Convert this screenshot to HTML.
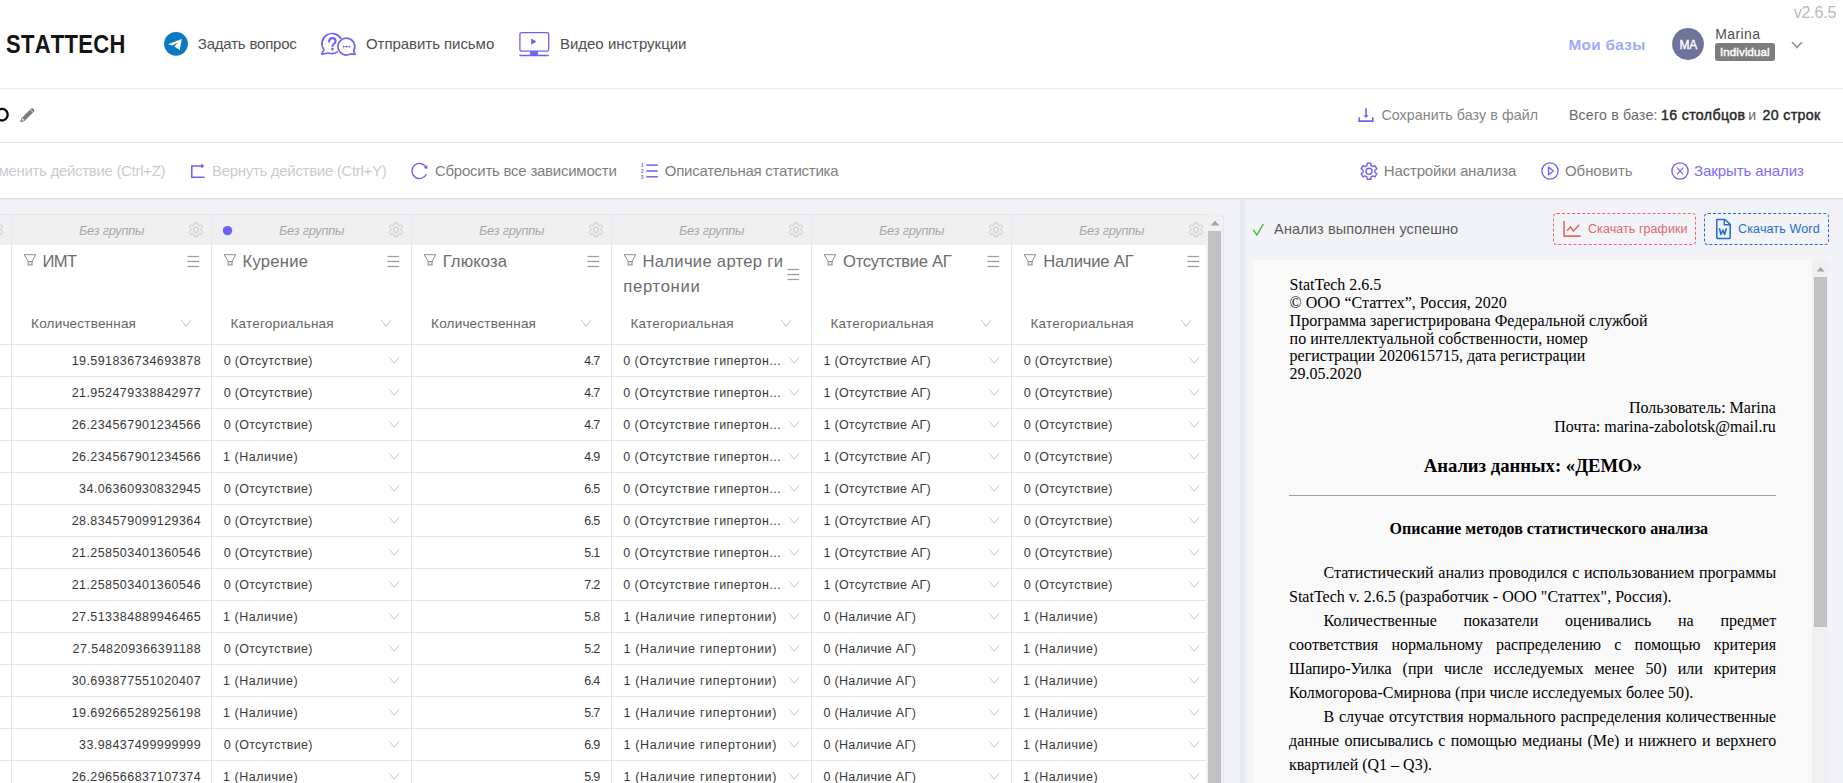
<!DOCTYPE html>
<html><head><meta charset="utf-8"><style>
html,body{margin:0;padding:0;width:1843px;height:783px;overflow:hidden;background:#fff;}
.t{position:absolute;white-space:nowrap;line-height:normal;}
.r{position:absolute;display:block;}
</style></head><body>
<div class="r" style="left:0px;top:0px;width:1843px;height:783px;background:#ffffff;"></div>
<div class="r" style="left:0px;top:88px;width:1843px;height:1px;background:#ebebeb;"></div>
<div class="r" style="left:0px;top:89px;width:1843px;height:1px;background:#f9f9f9;"></div>
<div class="r" style="left:0px;top:142px;width:1843px;height:1px;background:#e0e0e0;"></div>
<div class="r" style="left:0px;top:198px;width:1843px;height:1px;background:#dcdde2;"></div>
<div class="r" style="left:0px;top:199px;width:1843px;height:584px;background:#f2f3f7;"></div>
<div class="r" style="left:0px;top:199px;width:1843px;height:1px;background:#e9eaee;"></div>
<div class="t" id="stattech" style="left:6.00px;top:33.00px;font-size:22px;color:#141414;font-weight:bold;font-style:normal;font-family:'Liberation Sans', sans-serif;letter-spacing:0.286px;font-kerning:none;transform:scale(1,1.14);transform-origin:0 20px;">STATTECH</div>
<svg class="r" style="left:160px;top:28px;" width="32" height="32" viewBox="0 0 32 32"><circle cx="16" cy="15.85" r="11.9" fill="#0b78c2"/><path d="M8 16.3 L21.7 11 L19.8 21.9 L14.3 18.6 L18.2 14.1 L12.4 17.6 Z" fill="#fff"/></svg>
<div class="t" id="zadat" style="left:197.80px;top:35.00px;font-size:15px;color:#505050;font-weight:normal;font-style:normal;font-family:'Liberation Sans', sans-serif;letter-spacing:-0.200px;">Задать вопрос</div>
<svg class="r" style="left:316px;top:28px;" width="44" height="32" viewBox="0 0 44 32"><g fill="none" stroke="#6c63f5" stroke-width="1.65" stroke-linejoin="round"><path d="M25.14 10.89 A10.2 10.2 0 1 0 7.9 21.7 L5.6 26.1 L10.9 25.2 Q12.2 24.9 13.2 25.3 A10.2 10.2 0 0 0 21.75 23.56"/><path d="M37.67 22.8 A8.4 8.4 0 1 0 34.6 25.87 L39.1 26.4 Z"/></g><path d="M13.1 13.6 Q13.1 10.1 16.4 10.1 Q19.6 10.1 19.6 13 Q19.6 14.8 17.8 16 Q16.4 16.9 16.4 18.3" fill="none" stroke="#6c63f5" stroke-width="2.1" stroke-linecap="round"/><circle cx="16.4" cy="21.1" r="1.35" fill="#6c63f5"/><circle cx="27.4" cy="18.6" r="0.95" fill="#6c63f5"/><circle cx="30.4" cy="18.6" r="0.95" fill="#6c63f5"/><circle cx="33.5" cy="18.6" r="0.95" fill="#6c63f5"/><path d="M27.4 18.6 H33.5" stroke="#6c63f5" stroke-width="0.6"/></svg>
<div class="t" id="otpr" style="left:366.00px;top:35.00px;font-size:15px;color:#505050;font-weight:normal;font-style:normal;font-family:'Liberation Sans', sans-serif;letter-spacing:-0.053px;">Отправить письмо</div>
<svg class="r" style="left:514px;top:28px;" width="40" height="32" viewBox="0 0 40 32"><rect x="5.9" y="4.7" width="28.8" height="18.5" rx="1.6" fill="none" stroke="#6c63f5" stroke-width="1.3"/><path d="M17.2 10.6 L22.5 13.5 L17.2 16.8 Z" fill="#6c63f5"/><rect x="16.1" y="23.2" width="7.8" height="4" fill="#6c63f5"/><rect x="5.3" y="26.8" width="29.6" height="1.4" rx="0.6" fill="#6c63f5"/></svg>
<div class="t" id="video" style="left:559.90px;top:35.00px;font-size:15px;color:#505050;font-weight:normal;font-style:normal;font-family:'Liberation Sans', sans-serif;letter-spacing:0.000px;">Видео инструкции</div>
<div class="t" id="ver" style="left:1793.80px;top:4.10px;font-size:16px;color:#b9b9b9;font-weight:normal;font-style:normal;font-family:'Liberation Sans', sans-serif;letter-spacing:-0.200px;">v2.6.5</div>
<div class="t" id="mybases" style="left:1568.50px;top:36.00px;font-size:15.3px;color:#9eaafc;font-weight:bold;font-style:normal;font-family:'Liberation Sans', sans-serif;letter-spacing:0.314px;">Мои базы</div>
<svg class="r" style="left:1672px;top:28px;" width="32" height="32" viewBox="0 0 32 32"><circle cx="16" cy="16" r="15.9" fill="#6e7499"/></svg>
<div class="t" id="ma" style="left:1679.50px;top:38.00px;font-size:12px;color:#ffffff;font-weight:normal;font-style:normal;font-family:'Liberation Sans', sans-serif;letter-spacing:-0.300px;-webkit-text-stroke:0.35px #fff;">MA</div>
<div class="t" id="marina" style="left:1715.30px;top:25.90px;font-size:14px;color:#505050;font-weight:normal;font-style:normal;font-family:'Liberation Sans', sans-serif;letter-spacing:0.400px;">Marina</div>
<div class="r" style="left:1715px;top:43px;width:60px;height:18px;background:#7d7d7d;border-radius:3px;"></div>
<div class="t" id="indiv" style="left:1720.00px;top:46.00px;font-size:11.5px;color:#ffffff;font-weight:normal;font-style:normal;font-family:'Liberation Sans', sans-serif;letter-spacing:0.120px;-webkit-text-stroke:0.45px #fff;">Individual</div>
<svg class="r" style="left:1789px;top:38px;" width="16" height="14" viewBox="0 0 16 14"><path d="M3 4 L8 9.4 L13 4" fill="none" stroke="#969696" stroke-width="1.7"/></svg>
<svg class="r" style="left:-10px;top:104px;" width="22" height="22" viewBox="0 0 22 22"><ellipse cx="12.05" cy="10.65" rx="5.65" ry="5.85" fill="none" stroke="#0a0a0a" stroke-width="2.3"/></svg>
<svg class="r" style="left:18px;top:105px;" width="18" height="18" viewBox="0 0 18 18"><path d="M4.2 12.6 L13.2 3.6 Q14 2.9 14.8 3.6 L16 4.8 Q16.7 5.6 16 6.4 L7 15.4 Z" fill="#7a7a7a"/><path d="M12.3 4.5 L15.1 7.3" stroke="#fff" stroke-width="0.8"/><path d="M4.2 12.6 L7 15.4 L2.6 16.9 Z" fill="#fff" stroke="#7a7a7a" stroke-width="0.9" stroke-linejoin="round"/><path d="M2.6 16.9 L3.4 14.6 L4.8 16 Z" fill="#7a7a7a"/></svg>
<svg class="r" style="left:1354px;top:104px;" width="24" height="22" viewBox="0 0 24 22"><path d="M12 4.2 V12.5" stroke="#6c63f5" stroke-width="1.6"/><path d="M9.3 11.2 L14.7 11.2 L12 14 Z" fill="#6c63f5"/><path d="M5.1 13.2 V17.1 H18.8 V13.2" fill="none" stroke="#6c63f5" stroke-width="1.6"/></svg>
<div class="t" id="save" style="left:1381.40px;top:107.00px;font-size:14.2px;color:#858585;font-weight:normal;font-style:normal;font-family:'Liberation Sans', sans-serif;letter-spacing:0.100px;">Сохранить базу в файл</div>
<div class="t" id="vsego" style="left:1568.90px;top:107.00px;font-size:14.2px;color:#6a6a6a;font-weight:normal;font-style:normal;font-family:'Liberation Sans', sans-serif;letter-spacing:0.183px;">Всего в базе:</div>
<div class="t" id="16st" style="left:1660.90px;top:107.00px;font-size:14.2px;color:#2a2a2a;font-weight:normal;font-style:normal;font-family:'Liberation Sans', sans-serif;letter-spacing:0.360px;-webkit-text-stroke:0.45px #2a2a2a;">16 столбцов</div>
<div class="t" id="i" style="left:1748.20px;top:107.00px;font-size:14.2px;color:#6a6a6a;font-weight:normal;font-style:normal;font-family:'Liberation Sans', sans-serif;letter-spacing:0.000px;">и</div>
<div class="t" id="20str" style="left:1762.50px;top:107.00px;font-size:14.2px;color:#2a2a2a;font-weight:normal;font-style:normal;font-family:'Liberation Sans', sans-serif;letter-spacing:0.343px;-webkit-text-stroke:0.45px #2a2a2a;">20 строк</div>
<div class="t" id="undo" style="right:1677.80px;top:162.00px;font-size:15px;color:#c9cbd2;font-weight:normal;font-style:normal;font-family:'Liberation Sans', sans-serif;letter-spacing:-0.308px;">Отменить действие (Ctrl+Z)</div>
<svg class="r" style="left:185px;top:158px;" width="30" height="26" viewBox="0 0 30 26"><path d="M17.5 8.1 H6.8 V19.3 H19.6" fill="none" stroke="#6c63f5" stroke-width="1.5"/><path d="M16.2 5.6 L19.3 8.1 L16.2 10.6 Z" fill="#6c63f5"/></svg>
<div class="t" id="redo" style="left:212.00px;top:162.00px;font-size:15px;color:#c9cbd2;font-weight:normal;font-style:normal;font-family:'Liberation Sans', sans-serif;letter-spacing:-0.308px;">Вернуть действие (Ctrl+Y)</div>
<svg class="r" style="left:405px;top:158px;" width="30" height="26" viewBox="0 0 30 26"><path d="M20.9 8.8 A7.6 7.6 0 1 0 21.4 16.3" fill="none" stroke="#6c63f5" stroke-width="1.4"/><path d="M18.8 9.9 L22.3 7.1 L22.3 10.9 Z" fill="#6c63f5"/></svg>
<div class="t" id="reset" style="left:434.90px;top:162.00px;font-size:15px;color:#7f7f7f;font-weight:normal;font-style:normal;font-family:'Liberation Sans', sans-serif;letter-spacing:-0.243px;">Сбросить все зависимости</div>
<svg class="r" style="left:636px;top:158px;" width="28" height="26" viewBox="0 0 28 26"><g stroke="#6c63f5" stroke-width="1.5"><path d="M10.3 7.1 H21.9"/><path d="M10.3 13 H21.9"/><path d="M10.3 18.8 H21.9"/></g><g fill="#6c63f5" font-family="Liberation Sans" font-weight="bold" font-size="4.6"><text x="5" y="9">1</text><text x="5" y="14.8">2</text><text x="5" y="20.6">3</text></g></svg>
<div class="t" id="descr" style="left:664.80px;top:162.00px;font-size:15px;color:#7f7f7f;font-weight:normal;font-style:normal;font-family:'Liberation Sans', sans-serif;letter-spacing:-0.245px;">Описательная статистика</div>
<svg class="r" style="left:1356px;top:158px;" width="26" height="26" viewBox="0 0 26 26"><path d="M11.16 5.31 L14.84 5.31 L15.05 7.66 L16.86 8.70 L19.00 7.71 L20.84 10.90 L18.91 12.26 L18.91 14.34 L20.84 15.70 L19.00 18.89 L16.86 17.90 L15.05 18.94 L14.84 21.29 L11.16 21.29 L10.95 18.94 L9.14 17.90 L7.00 18.89 L5.16 15.70 L7.09 14.34 L7.09 12.26 L5.16 10.90 L7.00 7.71 L9.14 8.70 L10.95 7.66 Z" fill="none" stroke="#6c63f5" stroke-width="1.4" stroke-linejoin="round"/><circle cx="13" cy="13.3" r="3.1" fill="none" stroke="#6c63f5" stroke-width="1.4"/></svg>
<div class="t" id="settings" style="left:1383.80px;top:162.00px;font-size:15px;color:#7f7f7f;font-weight:normal;font-style:normal;font-family:'Liberation Sans', sans-serif;letter-spacing:-0.163px;">Настройки анализа</div>
<svg class="r" style="left:1536px;top:158px;" width="26" height="26" viewBox="0 0 26 26"><circle cx="14" cy="13" r="8.1" fill="none" stroke="#6c63f5" stroke-width="1.35"/><path d="M12.5 9.1 L17.4 13 L12.5 16.8 Z" fill="none" stroke="#6c63f5" stroke-width="1.35" stroke-linejoin="round"/></svg>
<div class="t" id="refresh" style="left:1565.00px;top:162.00px;font-size:15px;color:#7f7f7f;font-weight:normal;font-style:normal;font-family:'Liberation Sans', sans-serif;letter-spacing:-0.057px;">Обновить</div>
<svg class="r" style="left:1666px;top:158px;" width="26" height="26" viewBox="0 0 26 26"><circle cx="14" cy="13" r="8.1" fill="none" stroke="#6c63f5" stroke-width="1.35"/><path d="M11 9.6 L17.2 16.3 M17.2 9.6 L11 16.3" stroke="#6c63f5" stroke-width="1.2"/></svg>
<div class="t" id="close" style="left:1694.00px;top:162.00px;font-size:15px;color:#7c6ef5;font-weight:normal;font-style:normal;font-family:'Liberation Sans', sans-serif;letter-spacing:-0.077px;">Закрыть анализ</div>
<div class="r" style="left:0px;top:214px;width:1206px;height:31px;background:#efefef;"></div>
<div class="r" style="left:0px;top:245px;width:1206px;height:538px;background:#ffffff;"></div>
<div class="r" style="left:1206px;top:214px;width:18px;height:569px;background:#f0f0f0;"></div>
<svg class="r" style="left:1206px;top:214px;" width="18" height="16" viewBox="0 0 18 16"><path d="M4.6 11.6 L13.4 11.6 L9 6.8 Z" fill="#a3a3a3"/></svg>
<div class="r" style="left:1208px;top:231px;width:13px;height:552px;background:#c1c1c1;"></div>
<div class="r" style="left:0px;top:214px;width:1206px;height:1px;background:#e4e6ea;"></div>
<div class="r" style="left:1223px;top:214px;width:1px;height:569px;background:#e6e7eb;"></div>
<div class="r" style="left:11px;top:214px;width:1px;height:569px;background:#e5e6eb;"></div>
<div class="r" style="left:211px;top:214px;width:1px;height:569px;background:#e5e6eb;"></div>
<div class="r" style="left:411px;top:214px;width:1px;height:569px;background:#e5e6eb;"></div>
<div class="r" style="left:611px;top:214px;width:1px;height:569px;background:#e5e6eb;"></div>
<div class="r" style="left:811px;top:214px;width:1px;height:569px;background:#e5e6eb;"></div>
<div class="r" style="left:1011px;top:214px;width:1px;height:569px;background:#e5e6eb;"></div>
<div class="r" style="left:0px;top:344px;width:1206px;height:1px;background:#e5e6eb;"></div>
<div class="r" style="left:0px;top:376px;width:1206px;height:1px;background:#e5e6eb;"></div>
<div class="r" style="left:0px;top:408px;width:1206px;height:1px;background:#e5e6eb;"></div>
<div class="r" style="left:0px;top:440px;width:1206px;height:1px;background:#e5e6eb;"></div>
<div class="r" style="left:0px;top:472px;width:1206px;height:1px;background:#e5e6eb;"></div>
<div class="r" style="left:0px;top:504px;width:1206px;height:1px;background:#e5e6eb;"></div>
<div class="r" style="left:0px;top:536px;width:1206px;height:1px;background:#e5e6eb;"></div>
<div class="r" style="left:0px;top:568px;width:1206px;height:1px;background:#e5e6eb;"></div>
<div class="r" style="left:0px;top:600px;width:1206px;height:1px;background:#e5e6eb;"></div>
<div class="r" style="left:0px;top:632px;width:1206px;height:1px;background:#e5e6eb;"></div>
<div class="r" style="left:0px;top:664px;width:1206px;height:1px;background:#e5e6eb;"></div>
<div class="r" style="left:0px;top:696px;width:1206px;height:1px;background:#e5e6eb;"></div>
<div class="r" style="left:0px;top:728px;width:1206px;height:1px;background:#e5e6eb;"></div>
<div class="r" style="left:0px;top:760px;width:1206px;height:1px;background:#e5e6eb;"></div>
<svg class="r" style="left:221px;top:224px;" width="13" height="13" viewBox="0 0 13 13"><circle cx="6.5" cy="6.6" r="4.7" fill="#6c63f5"/></svg>
<svg class="r" style="left:-16px;top:218px;" width="24" height="24" viewBox="0 0 24 24"><path d="M10.43 4.98 L13.57 4.98 L13.78 6.91 L15.34 7.82 L17.12 7.03 L18.69 9.75 L17.12 10.90 L17.12 12.70 L18.69 13.85 L17.12 16.57 L15.34 15.78 L13.78 16.69 L13.57 18.62 L10.43 18.62 L10.22 16.69 L8.66 15.78 L6.88 16.57 L5.31 13.85 L6.88 12.70 L6.88 10.90 L5.31 9.75 L6.88 7.03 L8.66 7.82 L10.22 6.91 Z" fill="none" stroke="#c9c9c9" stroke-width="1.0" stroke-linejoin="round"/><circle cx="12" cy="11.8" r="2.6" fill="none" stroke="#c9c9c9" stroke-width="1.0"/></svg>
<div class="t" id="grp0" style="left:78.90px;top:223.00px;font-size:12.8px;color:#a9a9a9;font-weight:normal;font-style:italic;font-family:'Liberation Sans', sans-serif;letter-spacing:-0.244px;">Без группы</div>
<svg class="r" style="left:184px;top:218px;" width="24" height="24" viewBox="0 0 24 24"><path d="M10.43 4.98 L13.57 4.98 L13.78 6.91 L15.34 7.82 L17.12 7.03 L18.69 9.75 L17.12 10.90 L17.12 12.70 L18.69 13.85 L17.12 16.57 L15.34 15.78 L13.78 16.69 L13.57 18.62 L10.43 18.62 L10.22 16.69 L8.66 15.78 L6.88 16.57 L5.31 13.85 L6.88 12.70 L6.88 10.90 L5.31 9.75 L6.88 7.03 L8.66 7.82 L10.22 6.91 Z" fill="none" stroke="#c9c9c9" stroke-width="1.0" stroke-linejoin="round"/><circle cx="12" cy="11.8" r="2.6" fill="none" stroke="#c9c9c9" stroke-width="1.0"/></svg>
<svg class="r" style="left:20px;top:250px;" width="20" height="20" viewBox="0 0 20 20"><path d="M4.1 4.7 H15.8 L12 11.5 H8.2 Z" fill="none" stroke="#8a8a8a" stroke-width="1" stroke-linejoin="round"/><rect x="8.2" y="11.5" width="3.8" height="3.4" fill="none" stroke="#8a8a8a" stroke-width="1.1"/></svg>
<div class="t" id="title0" style="left:42.50px;top:252.20px;font-size:16.6px;color:#6c6c6c;font-weight:normal;font-style:normal;font-family:'Liberation Sans', sans-serif;letter-spacing:-0.600px;">ИМТ</div>
<svg class="r" style="left:183px;top:254px;" width="16" height="14" viewBox="0 0 16 14"><g stroke="#9c9c9c" stroke-width="1.25"><path d="M4.4 2.5 H16"/><path d="M4.4 7.5 H16"/><path d="M4.4 12.5 H16"/></g></svg>
<div class="t" id="type0" style="left:31.10px;top:316.00px;font-size:13.5px;color:#666666;font-weight:normal;font-style:normal;font-family:'Liberation Sans', sans-serif;letter-spacing:0.200px;">Количественная</div>
<svg class="r" style="left:176px;top:314px;" width="20" height="20" viewBox="0 0 20 20"><path d="M5.1 6.1 L10 12.5 L14.7 6.3" fill="none" stroke="#c4c4c4" stroke-width="1"/></svg>
<div class="t" id="grp1" style="left:278.90px;top:223.00px;font-size:12.8px;color:#a9a9a9;font-weight:normal;font-style:italic;font-family:'Liberation Sans', sans-serif;letter-spacing:-0.244px;">Без группы</div>
<svg class="r" style="left:384px;top:218px;" width="24" height="24" viewBox="0 0 24 24"><path d="M10.43 4.98 L13.57 4.98 L13.78 6.91 L15.34 7.82 L17.12 7.03 L18.69 9.75 L17.12 10.90 L17.12 12.70 L18.69 13.85 L17.12 16.57 L15.34 15.78 L13.78 16.69 L13.57 18.62 L10.43 18.62 L10.22 16.69 L8.66 15.78 L6.88 16.57 L5.31 13.85 L6.88 12.70 L6.88 10.90 L5.31 9.75 L6.88 7.03 L8.66 7.82 L10.22 6.91 Z" fill="none" stroke="#c9c9c9" stroke-width="1.0" stroke-linejoin="round"/><circle cx="12" cy="11.8" r="2.6" fill="none" stroke="#c9c9c9" stroke-width="1.0"/></svg>
<svg class="r" style="left:220px;top:250px;" width="20" height="20" viewBox="0 0 20 20"><path d="M4.1 4.7 H15.8 L12 11.5 H8.2 Z" fill="none" stroke="#8a8a8a" stroke-width="1" stroke-linejoin="round"/><rect x="8.2" y="11.5" width="3.8" height="3.4" fill="none" stroke="#8a8a8a" stroke-width="1.1"/></svg>
<div class="t" id="title1" style="left:242.50px;top:252.20px;font-size:16.6px;color:#6c6c6c;font-weight:normal;font-style:normal;font-family:'Liberation Sans', sans-serif;letter-spacing:0.267px;">Курение</div>
<svg class="r" style="left:383px;top:254px;" width="16" height="14" viewBox="0 0 16 14"><g stroke="#9c9c9c" stroke-width="1.25"><path d="M4.4 2.5 H16"/><path d="M4.4 7.5 H16"/><path d="M4.4 12.5 H16"/></g></svg>
<div class="t" id="type1" style="left:230.50px;top:316.00px;font-size:13.5px;color:#666666;font-weight:normal;font-style:normal;font-family:'Liberation Sans', sans-serif;letter-spacing:0.200px;">Категориальная</div>
<svg class="r" style="left:376px;top:314px;" width="20" height="20" viewBox="0 0 20 20"><path d="M5.1 6.1 L10 12.5 L14.7 6.3" fill="none" stroke="#c4c4c4" stroke-width="1"/></svg>
<div class="t" id="grp2" style="left:478.90px;top:223.00px;font-size:12.8px;color:#a9a9a9;font-weight:normal;font-style:italic;font-family:'Liberation Sans', sans-serif;letter-spacing:-0.244px;">Без группы</div>
<svg class="r" style="left:584px;top:218px;" width="24" height="24" viewBox="0 0 24 24"><path d="M10.43 4.98 L13.57 4.98 L13.78 6.91 L15.34 7.82 L17.12 7.03 L18.69 9.75 L17.12 10.90 L17.12 12.70 L18.69 13.85 L17.12 16.57 L15.34 15.78 L13.78 16.69 L13.57 18.62 L10.43 18.62 L10.22 16.69 L8.66 15.78 L6.88 16.57 L5.31 13.85 L6.88 12.70 L6.88 10.90 L5.31 9.75 L6.88 7.03 L8.66 7.82 L10.22 6.91 Z" fill="none" stroke="#c9c9c9" stroke-width="1.0" stroke-linejoin="round"/><circle cx="12" cy="11.8" r="2.6" fill="none" stroke="#c9c9c9" stroke-width="1.0"/></svg>
<svg class="r" style="left:420px;top:250px;" width="20" height="20" viewBox="0 0 20 20"><path d="M4.1 4.7 H15.8 L12 11.5 H8.2 Z" fill="none" stroke="#8a8a8a" stroke-width="1" stroke-linejoin="round"/><rect x="8.2" y="11.5" width="3.8" height="3.4" fill="none" stroke="#8a8a8a" stroke-width="1.1"/></svg>
<div class="t" id="title2" style="left:442.70px;top:252.20px;font-size:16.6px;color:#6c6c6c;font-weight:normal;font-style:normal;font-family:'Liberation Sans', sans-serif;letter-spacing:0.133px;">Глюкоза</div>
<svg class="r" style="left:583px;top:254px;" width="16" height="14" viewBox="0 0 16 14"><g stroke="#9c9c9c" stroke-width="1.25"><path d="M4.4 2.5 H16"/><path d="M4.4 7.5 H16"/><path d="M4.4 12.5 H16"/></g></svg>
<div class="t" id="type2" style="left:431.10px;top:316.00px;font-size:13.5px;color:#666666;font-weight:normal;font-style:normal;font-family:'Liberation Sans', sans-serif;letter-spacing:0.200px;">Количественная</div>
<svg class="r" style="left:576px;top:314px;" width="20" height="20" viewBox="0 0 20 20"><path d="M5.1 6.1 L10 12.5 L14.7 6.3" fill="none" stroke="#c4c4c4" stroke-width="1"/></svg>
<div class="t" id="grp3" style="left:678.90px;top:223.00px;font-size:12.8px;color:#a9a9a9;font-weight:normal;font-style:italic;font-family:'Liberation Sans', sans-serif;letter-spacing:-0.244px;">Без группы</div>
<svg class="r" style="left:784px;top:218px;" width="24" height="24" viewBox="0 0 24 24"><path d="M10.43 4.98 L13.57 4.98 L13.78 6.91 L15.34 7.82 L17.12 7.03 L18.69 9.75 L17.12 10.90 L17.12 12.70 L18.69 13.85 L17.12 16.57 L15.34 15.78 L13.78 16.69 L13.57 18.62 L10.43 18.62 L10.22 16.69 L8.66 15.78 L6.88 16.57 L5.31 13.85 L6.88 12.70 L6.88 10.90 L5.31 9.75 L6.88 7.03 L8.66 7.82 L10.22 6.91 Z" fill="none" stroke="#c9c9c9" stroke-width="1.0" stroke-linejoin="round"/><circle cx="12" cy="11.8" r="2.6" fill="none" stroke="#c9c9c9" stroke-width="1.0"/></svg>
<svg class="r" style="left:620px;top:250px;" width="20" height="20" viewBox="0 0 20 20"><path d="M4.1 4.7 H15.8 L12 11.5 H8.2 Z" fill="none" stroke="#8a8a8a" stroke-width="1" stroke-linejoin="round"/><rect x="8.2" y="11.5" width="3.8" height="3.4" fill="none" stroke="#8a8a8a" stroke-width="1.1"/></svg>
<div class="t" id="title3a" style="left:642.50px;top:252.30px;font-size:16.6px;color:#6c6c6c;font-weight:normal;font-style:normal;font-family:'Liberation Sans', sans-serif;letter-spacing:0.307px;">Наличие артер ги</div>
<div class="t" id="title3b" style="left:623.20px;top:276.90px;font-size:16.6px;color:#6c6c6c;font-weight:normal;font-style:normal;font-family:'Liberation Sans', sans-serif;letter-spacing:0.743px;">пертонии</div>
<svg class="r" style="left:783px;top:267px;" width="16" height="14" viewBox="0 0 16 14"><g stroke="#9c9c9c" stroke-width="1.25"><path d="M4.4 2.5 H16"/><path d="M4.4 7.5 H16"/><path d="M4.4 12.5 H16"/></g></svg>
<div class="t" id="type3" style="left:630.50px;top:316.00px;font-size:13.5px;color:#666666;font-weight:normal;font-style:normal;font-family:'Liberation Sans', sans-serif;letter-spacing:0.200px;">Категориальная</div>
<svg class="r" style="left:776px;top:314px;" width="20" height="20" viewBox="0 0 20 20"><path d="M5.1 6.1 L10 12.5 L14.7 6.3" fill="none" stroke="#c4c4c4" stroke-width="1"/></svg>
<div class="t" id="grp4" style="left:878.90px;top:223.00px;font-size:12.8px;color:#a9a9a9;font-weight:normal;font-style:italic;font-family:'Liberation Sans', sans-serif;letter-spacing:-0.244px;">Без группы</div>
<svg class="r" style="left:984px;top:218px;" width="24" height="24" viewBox="0 0 24 24"><path d="M10.43 4.98 L13.57 4.98 L13.78 6.91 L15.34 7.82 L17.12 7.03 L18.69 9.75 L17.12 10.90 L17.12 12.70 L18.69 13.85 L17.12 16.57 L15.34 15.78 L13.78 16.69 L13.57 18.62 L10.43 18.62 L10.22 16.69 L8.66 15.78 L6.88 16.57 L5.31 13.85 L6.88 12.70 L6.88 10.90 L5.31 9.75 L6.88 7.03 L8.66 7.82 L10.22 6.91 Z" fill="none" stroke="#c9c9c9" stroke-width="1.0" stroke-linejoin="round"/><circle cx="12" cy="11.8" r="2.6" fill="none" stroke="#c9c9c9" stroke-width="1.0"/></svg>
<svg class="r" style="left:820px;top:250px;" width="20" height="20" viewBox="0 0 20 20"><path d="M4.1 4.7 H15.8 L12 11.5 H8.2 Z" fill="none" stroke="#8a8a8a" stroke-width="1" stroke-linejoin="round"/><rect x="8.2" y="11.5" width="3.8" height="3.4" fill="none" stroke="#8a8a8a" stroke-width="1.1"/></svg>
<div class="t" id="title4" style="left:843.10px;top:252.20px;font-size:16.6px;color:#6c6c6c;font-weight:normal;font-style:normal;font-family:'Liberation Sans', sans-serif;letter-spacing:-0.300px;">Отсутствие АГ</div>
<svg class="r" style="left:983px;top:254px;" width="16" height="14" viewBox="0 0 16 14"><g stroke="#9c9c9c" stroke-width="1.25"><path d="M4.4 2.5 H16"/><path d="M4.4 7.5 H16"/><path d="M4.4 12.5 H16"/></g></svg>
<div class="t" id="type4" style="left:830.50px;top:316.00px;font-size:13.5px;color:#666666;font-weight:normal;font-style:normal;font-family:'Liberation Sans', sans-serif;letter-spacing:0.200px;">Категориальная</div>
<svg class="r" style="left:976px;top:314px;" width="20" height="20" viewBox="0 0 20 20"><path d="M5.1 6.1 L10 12.5 L14.7 6.3" fill="none" stroke="#c4c4c4" stroke-width="1"/></svg>
<div class="t" id="grp5" style="left:1078.90px;top:223.00px;font-size:12.8px;color:#a9a9a9;font-weight:normal;font-style:italic;font-family:'Liberation Sans', sans-serif;letter-spacing:-0.244px;">Без группы</div>
<svg class="r" style="left:1184px;top:218px;" width="24" height="24" viewBox="0 0 24 24"><path d="M10.43 4.98 L13.57 4.98 L13.78 6.91 L15.34 7.82 L17.12 7.03 L18.69 9.75 L17.12 10.90 L17.12 12.70 L18.69 13.85 L17.12 16.57 L15.34 15.78 L13.78 16.69 L13.57 18.62 L10.43 18.62 L10.22 16.69 L8.66 15.78 L6.88 16.57 L5.31 13.85 L6.88 12.70 L6.88 10.90 L5.31 9.75 L6.88 7.03 L8.66 7.82 L10.22 6.91 Z" fill="none" stroke="#c9c9c9" stroke-width="1.0" stroke-linejoin="round"/><circle cx="12" cy="11.8" r="2.6" fill="none" stroke="#c9c9c9" stroke-width="1.0"/></svg>
<svg class="r" style="left:1020px;top:250px;" width="20" height="20" viewBox="0 0 20 20"><path d="M4.1 4.7 H15.8 L12 11.5 H8.2 Z" fill="none" stroke="#8a8a8a" stroke-width="1" stroke-linejoin="round"/><rect x="8.2" y="11.5" width="3.8" height="3.4" fill="none" stroke="#8a8a8a" stroke-width="1.1"/></svg>
<div class="t" id="title5" style="left:1043.30px;top:252.20px;font-size:16.6px;color:#6c6c6c;font-weight:normal;font-style:normal;font-family:'Liberation Sans', sans-serif;letter-spacing:-0.178px;">Наличие АГ</div>
<svg class="r" style="left:1183px;top:254px;" width="16" height="14" viewBox="0 0 16 14"><g stroke="#9c9c9c" stroke-width="1.25"><path d="M4.4 2.5 H16"/><path d="M4.4 7.5 H16"/><path d="M4.4 12.5 H16"/></g></svg>
<div class="t" id="type5" style="left:1030.50px;top:316.00px;font-size:13.5px;color:#666666;font-weight:normal;font-style:normal;font-family:'Liberation Sans', sans-serif;letter-spacing:0.200px;">Категориальная</div>
<svg class="r" style="left:1176px;top:314px;" width="20" height="20" viewBox="0 0 20 20"><path d="M5.1 6.1 L10 12.5 L14.7 6.3" fill="none" stroke="#c4c4c4" stroke-width="1"/></svg>
<div class="t" id="imt0" style="right:1641.86px;top:354.00px;font-size:12.5px;color:#383838;font-weight:normal;font-style:normal;font-family:'Liberation Sans', sans-serif;letter-spacing:0.435px;">19.591836734693878</div>
<div class="t" id="kur0" style="left:223.70px;top:354.00px;font-size:12.5px;color:#383838;font-weight:normal;font-style:normal;font-family:'Liberation Sans', sans-serif;letter-spacing:0.308px;">0 (Отсутствие)</div>
<svg class="r" style="left:387px;top:355px;" width="16" height="12" viewBox="0 0 16 12"><path d="M2.4 2.3 L7.2 8.4 L12 2.3" fill="none" stroke="#c8c8c8" stroke-width="1"/></svg>
<div class="t" id="glu0" style="right:1243.50px;top:354.00px;font-size:12.5px;color:#383838;font-weight:normal;font-style:normal;font-family:'Liberation Sans', sans-serif;letter-spacing:-0.700px;">4.7</div>
<div class="t" id="art0" style="left:623.20px;top:354.00px;font-size:12.5px;color:#383838;font-weight:normal;font-style:normal;font-family:'Liberation Sans', sans-serif;letter-spacing:0.492px;">0 (Отсутствие гипертон...</div>
<svg class="r" style="left:787px;top:355px;" width="16" height="12" viewBox="0 0 16 12"><path d="M2.4 2.3 L7.2 8.4 L12 2.3" fill="none" stroke="#c8c8c8" stroke-width="1"/></svg>
<div class="t" id="ots0" style="left:823.60px;top:354.00px;font-size:12.5px;color:#383838;font-weight:normal;font-style:normal;font-family:'Liberation Sans', sans-serif;letter-spacing:0.237px;">1 (Отсутствие АГ)</div>
<svg class="r" style="left:987px;top:355px;" width="16" height="12" viewBox="0 0 16 12"><path d="M2.4 2.3 L7.2 8.4 L12 2.3" fill="none" stroke="#c8c8c8" stroke-width="1"/></svg>
<div class="t" id="nal0" style="left:1023.70px;top:354.00px;font-size:12.5px;color:#383838;font-weight:normal;font-style:normal;font-family:'Liberation Sans', sans-serif;letter-spacing:0.308px;">0 (Отсутствие)</div>
<svg class="r" style="left:1187px;top:355px;" width="16" height="12" viewBox="0 0 16 12"><path d="M2.4 2.3 L7.2 8.4 L12 2.3" fill="none" stroke="#c8c8c8" stroke-width="1"/></svg>
<div class="t" id="imt1" style="right:1641.86px;top:386.00px;font-size:12.5px;color:#383838;font-weight:normal;font-style:normal;font-family:'Liberation Sans', sans-serif;letter-spacing:0.435px;">21.952479338842977</div>
<div class="t" id="kur1" style="left:223.70px;top:386.00px;font-size:12.5px;color:#383838;font-weight:normal;font-style:normal;font-family:'Liberation Sans', sans-serif;letter-spacing:0.308px;">0 (Отсутствие)</div>
<svg class="r" style="left:387px;top:387px;" width="16" height="12" viewBox="0 0 16 12"><path d="M2.4 2.3 L7.2 8.4 L12 2.3" fill="none" stroke="#c8c8c8" stroke-width="1"/></svg>
<div class="t" id="glu1" style="right:1243.50px;top:386.00px;font-size:12.5px;color:#383838;font-weight:normal;font-style:normal;font-family:'Liberation Sans', sans-serif;letter-spacing:-0.700px;">4.7</div>
<div class="t" id="art1" style="left:623.20px;top:386.00px;font-size:12.5px;color:#383838;font-weight:normal;font-style:normal;font-family:'Liberation Sans', sans-serif;letter-spacing:0.492px;">0 (Отсутствие гипертон...</div>
<svg class="r" style="left:787px;top:387px;" width="16" height="12" viewBox="0 0 16 12"><path d="M2.4 2.3 L7.2 8.4 L12 2.3" fill="none" stroke="#c8c8c8" stroke-width="1"/></svg>
<div class="t" id="ots1" style="left:823.60px;top:386.00px;font-size:12.5px;color:#383838;font-weight:normal;font-style:normal;font-family:'Liberation Sans', sans-serif;letter-spacing:0.237px;">1 (Отсутствие АГ)</div>
<svg class="r" style="left:987px;top:387px;" width="16" height="12" viewBox="0 0 16 12"><path d="M2.4 2.3 L7.2 8.4 L12 2.3" fill="none" stroke="#c8c8c8" stroke-width="1"/></svg>
<div class="t" id="nal1" style="left:1023.70px;top:386.00px;font-size:12.5px;color:#383838;font-weight:normal;font-style:normal;font-family:'Liberation Sans', sans-serif;letter-spacing:0.308px;">0 (Отсутствие)</div>
<svg class="r" style="left:1187px;top:387px;" width="16" height="12" viewBox="0 0 16 12"><path d="M2.4 2.3 L7.2 8.4 L12 2.3" fill="none" stroke="#c8c8c8" stroke-width="1"/></svg>
<div class="t" id="imt2" style="right:1641.86px;top:418.00px;font-size:12.5px;color:#383838;font-weight:normal;font-style:normal;font-family:'Liberation Sans', sans-serif;letter-spacing:0.435px;">26.234567901234566</div>
<div class="t" id="kur2" style="left:223.70px;top:418.00px;font-size:12.5px;color:#383838;font-weight:normal;font-style:normal;font-family:'Liberation Sans', sans-serif;letter-spacing:0.308px;">0 (Отсутствие)</div>
<svg class="r" style="left:387px;top:419px;" width="16" height="12" viewBox="0 0 16 12"><path d="M2.4 2.3 L7.2 8.4 L12 2.3" fill="none" stroke="#c8c8c8" stroke-width="1"/></svg>
<div class="t" id="glu2" style="right:1243.50px;top:418.00px;font-size:12.5px;color:#383838;font-weight:normal;font-style:normal;font-family:'Liberation Sans', sans-serif;letter-spacing:-0.700px;">4.7</div>
<div class="t" id="art2" style="left:623.20px;top:418.00px;font-size:12.5px;color:#383838;font-weight:normal;font-style:normal;font-family:'Liberation Sans', sans-serif;letter-spacing:0.492px;">0 (Отсутствие гипертон...</div>
<svg class="r" style="left:787px;top:419px;" width="16" height="12" viewBox="0 0 16 12"><path d="M2.4 2.3 L7.2 8.4 L12 2.3" fill="none" stroke="#c8c8c8" stroke-width="1"/></svg>
<div class="t" id="ots2" style="left:823.60px;top:418.00px;font-size:12.5px;color:#383838;font-weight:normal;font-style:normal;font-family:'Liberation Sans', sans-serif;letter-spacing:0.237px;">1 (Отсутствие АГ)</div>
<svg class="r" style="left:987px;top:419px;" width="16" height="12" viewBox="0 0 16 12"><path d="M2.4 2.3 L7.2 8.4 L12 2.3" fill="none" stroke="#c8c8c8" stroke-width="1"/></svg>
<div class="t" id="nal2" style="left:1023.70px;top:418.00px;font-size:12.5px;color:#383838;font-weight:normal;font-style:normal;font-family:'Liberation Sans', sans-serif;letter-spacing:0.308px;">0 (Отсутствие)</div>
<svg class="r" style="left:1187px;top:419px;" width="16" height="12" viewBox="0 0 16 12"><path d="M2.4 2.3 L7.2 8.4 L12 2.3" fill="none" stroke="#c8c8c8" stroke-width="1"/></svg>
<div class="t" id="imt3" style="right:1641.86px;top:450.00px;font-size:12.5px;color:#383838;font-weight:normal;font-style:normal;font-family:'Liberation Sans', sans-serif;letter-spacing:0.435px;">26.234567901234566</div>
<div class="t" id="kur3" style="left:223.10px;top:450.00px;font-size:12.5px;color:#383838;font-weight:normal;font-style:normal;font-family:'Liberation Sans', sans-serif;letter-spacing:0.500px;">1 (Наличие)</div>
<svg class="r" style="left:387px;top:451px;" width="16" height="12" viewBox="0 0 16 12"><path d="M2.4 2.3 L7.2 8.4 L12 2.3" fill="none" stroke="#c8c8c8" stroke-width="1"/></svg>
<div class="t" id="glu3" style="right:1243.50px;top:450.00px;font-size:12.5px;color:#383838;font-weight:normal;font-style:normal;font-family:'Liberation Sans', sans-serif;letter-spacing:-0.700px;">4.9</div>
<div class="t" id="art3" style="left:623.20px;top:450.00px;font-size:12.5px;color:#383838;font-weight:normal;font-style:normal;font-family:'Liberation Sans', sans-serif;letter-spacing:0.492px;">0 (Отсутствие гипертон...</div>
<svg class="r" style="left:787px;top:451px;" width="16" height="12" viewBox="0 0 16 12"><path d="M2.4 2.3 L7.2 8.4 L12 2.3" fill="none" stroke="#c8c8c8" stroke-width="1"/></svg>
<div class="t" id="ots3" style="left:823.60px;top:450.00px;font-size:12.5px;color:#383838;font-weight:normal;font-style:normal;font-family:'Liberation Sans', sans-serif;letter-spacing:0.237px;">1 (Отсутствие АГ)</div>
<svg class="r" style="left:987px;top:451px;" width="16" height="12" viewBox="0 0 16 12"><path d="M2.4 2.3 L7.2 8.4 L12 2.3" fill="none" stroke="#c8c8c8" stroke-width="1"/></svg>
<div class="t" id="nal3" style="left:1023.70px;top:450.00px;font-size:12.5px;color:#383838;font-weight:normal;font-style:normal;font-family:'Liberation Sans', sans-serif;letter-spacing:0.308px;">0 (Отсутствие)</div>
<svg class="r" style="left:1187px;top:451px;" width="16" height="12" viewBox="0 0 16 12"><path d="M2.4 2.3 L7.2 8.4 L12 2.3" fill="none" stroke="#c8c8c8" stroke-width="1"/></svg>
<div class="t" id="imt4" style="right:1641.86px;top:482.00px;font-size:12.5px;color:#383838;font-weight:normal;font-style:normal;font-family:'Liberation Sans', sans-serif;letter-spacing:0.435px;">34.06360930832945</div>
<div class="t" id="kur4" style="left:223.70px;top:482.00px;font-size:12.5px;color:#383838;font-weight:normal;font-style:normal;font-family:'Liberation Sans', sans-serif;letter-spacing:0.308px;">0 (Отсутствие)</div>
<svg class="r" style="left:387px;top:483px;" width="16" height="12" viewBox="0 0 16 12"><path d="M2.4 2.3 L7.2 8.4 L12 2.3" fill="none" stroke="#c8c8c8" stroke-width="1"/></svg>
<div class="t" id="glu4" style="right:1243.50px;top:482.00px;font-size:12.5px;color:#383838;font-weight:normal;font-style:normal;font-family:'Liberation Sans', sans-serif;letter-spacing:-0.700px;">6.5</div>
<div class="t" id="art4" style="left:623.20px;top:482.00px;font-size:12.5px;color:#383838;font-weight:normal;font-style:normal;font-family:'Liberation Sans', sans-serif;letter-spacing:0.492px;">0 (Отсутствие гипертон...</div>
<svg class="r" style="left:787px;top:483px;" width="16" height="12" viewBox="0 0 16 12"><path d="M2.4 2.3 L7.2 8.4 L12 2.3" fill="none" stroke="#c8c8c8" stroke-width="1"/></svg>
<div class="t" id="ots4" style="left:823.60px;top:482.00px;font-size:12.5px;color:#383838;font-weight:normal;font-style:normal;font-family:'Liberation Sans', sans-serif;letter-spacing:0.237px;">1 (Отсутствие АГ)</div>
<svg class="r" style="left:987px;top:483px;" width="16" height="12" viewBox="0 0 16 12"><path d="M2.4 2.3 L7.2 8.4 L12 2.3" fill="none" stroke="#c8c8c8" stroke-width="1"/></svg>
<div class="t" id="nal4" style="left:1023.70px;top:482.00px;font-size:12.5px;color:#383838;font-weight:normal;font-style:normal;font-family:'Liberation Sans', sans-serif;letter-spacing:0.308px;">0 (Отсутствие)</div>
<svg class="r" style="left:1187px;top:483px;" width="16" height="12" viewBox="0 0 16 12"><path d="M2.4 2.3 L7.2 8.4 L12 2.3" fill="none" stroke="#c8c8c8" stroke-width="1"/></svg>
<div class="t" id="imt5" style="right:1641.86px;top:514.00px;font-size:12.5px;color:#383838;font-weight:normal;font-style:normal;font-family:'Liberation Sans', sans-serif;letter-spacing:0.435px;">28.834579099129364</div>
<div class="t" id="kur5" style="left:223.70px;top:514.00px;font-size:12.5px;color:#383838;font-weight:normal;font-style:normal;font-family:'Liberation Sans', sans-serif;letter-spacing:0.308px;">0 (Отсутствие)</div>
<svg class="r" style="left:387px;top:515px;" width="16" height="12" viewBox="0 0 16 12"><path d="M2.4 2.3 L7.2 8.4 L12 2.3" fill="none" stroke="#c8c8c8" stroke-width="1"/></svg>
<div class="t" id="glu5" style="right:1243.50px;top:514.00px;font-size:12.5px;color:#383838;font-weight:normal;font-style:normal;font-family:'Liberation Sans', sans-serif;letter-spacing:-0.700px;">6.5</div>
<div class="t" id="art5" style="left:623.20px;top:514.00px;font-size:12.5px;color:#383838;font-weight:normal;font-style:normal;font-family:'Liberation Sans', sans-serif;letter-spacing:0.492px;">0 (Отсутствие гипертон...</div>
<svg class="r" style="left:787px;top:515px;" width="16" height="12" viewBox="0 0 16 12"><path d="M2.4 2.3 L7.2 8.4 L12 2.3" fill="none" stroke="#c8c8c8" stroke-width="1"/></svg>
<div class="t" id="ots5" style="left:823.60px;top:514.00px;font-size:12.5px;color:#383838;font-weight:normal;font-style:normal;font-family:'Liberation Sans', sans-serif;letter-spacing:0.237px;">1 (Отсутствие АГ)</div>
<svg class="r" style="left:987px;top:515px;" width="16" height="12" viewBox="0 0 16 12"><path d="M2.4 2.3 L7.2 8.4 L12 2.3" fill="none" stroke="#c8c8c8" stroke-width="1"/></svg>
<div class="t" id="nal5" style="left:1023.70px;top:514.00px;font-size:12.5px;color:#383838;font-weight:normal;font-style:normal;font-family:'Liberation Sans', sans-serif;letter-spacing:0.308px;">0 (Отсутствие)</div>
<svg class="r" style="left:1187px;top:515px;" width="16" height="12" viewBox="0 0 16 12"><path d="M2.4 2.3 L7.2 8.4 L12 2.3" fill="none" stroke="#c8c8c8" stroke-width="1"/></svg>
<div class="t" id="imt6" style="right:1641.86px;top:546.00px;font-size:12.5px;color:#383838;font-weight:normal;font-style:normal;font-family:'Liberation Sans', sans-serif;letter-spacing:0.435px;">21.258503401360546</div>
<div class="t" id="kur6" style="left:223.70px;top:546.00px;font-size:12.5px;color:#383838;font-weight:normal;font-style:normal;font-family:'Liberation Sans', sans-serif;letter-spacing:0.308px;">0 (Отсутствие)</div>
<svg class="r" style="left:387px;top:547px;" width="16" height="12" viewBox="0 0 16 12"><path d="M2.4 2.3 L7.2 8.4 L12 2.3" fill="none" stroke="#c8c8c8" stroke-width="1"/></svg>
<div class="t" id="glu6" style="right:1243.50px;top:546.00px;font-size:12.5px;color:#383838;font-weight:normal;font-style:normal;font-family:'Liberation Sans', sans-serif;letter-spacing:-0.700px;">5.1</div>
<div class="t" id="art6" style="left:623.20px;top:546.00px;font-size:12.5px;color:#383838;font-weight:normal;font-style:normal;font-family:'Liberation Sans', sans-serif;letter-spacing:0.492px;">0 (Отсутствие гипертон...</div>
<svg class="r" style="left:787px;top:547px;" width="16" height="12" viewBox="0 0 16 12"><path d="M2.4 2.3 L7.2 8.4 L12 2.3" fill="none" stroke="#c8c8c8" stroke-width="1"/></svg>
<div class="t" id="ots6" style="left:823.60px;top:546.00px;font-size:12.5px;color:#383838;font-weight:normal;font-style:normal;font-family:'Liberation Sans', sans-serif;letter-spacing:0.237px;">1 (Отсутствие АГ)</div>
<svg class="r" style="left:987px;top:547px;" width="16" height="12" viewBox="0 0 16 12"><path d="M2.4 2.3 L7.2 8.4 L12 2.3" fill="none" stroke="#c8c8c8" stroke-width="1"/></svg>
<div class="t" id="nal6" style="left:1023.70px;top:546.00px;font-size:12.5px;color:#383838;font-weight:normal;font-style:normal;font-family:'Liberation Sans', sans-serif;letter-spacing:0.308px;">0 (Отсутствие)</div>
<svg class="r" style="left:1187px;top:547px;" width="16" height="12" viewBox="0 0 16 12"><path d="M2.4 2.3 L7.2 8.4 L12 2.3" fill="none" stroke="#c8c8c8" stroke-width="1"/></svg>
<div class="t" id="imt7" style="right:1641.86px;top:578.00px;font-size:12.5px;color:#383838;font-weight:normal;font-style:normal;font-family:'Liberation Sans', sans-serif;letter-spacing:0.435px;">21.258503401360546</div>
<div class="t" id="kur7" style="left:223.70px;top:578.00px;font-size:12.5px;color:#383838;font-weight:normal;font-style:normal;font-family:'Liberation Sans', sans-serif;letter-spacing:0.308px;">0 (Отсутствие)</div>
<svg class="r" style="left:387px;top:579px;" width="16" height="12" viewBox="0 0 16 12"><path d="M2.4 2.3 L7.2 8.4 L12 2.3" fill="none" stroke="#c8c8c8" stroke-width="1"/></svg>
<div class="t" id="glu7" style="right:1243.50px;top:578.00px;font-size:12.5px;color:#383838;font-weight:normal;font-style:normal;font-family:'Liberation Sans', sans-serif;letter-spacing:-0.700px;">7.2</div>
<div class="t" id="art7" style="left:623.20px;top:578.00px;font-size:12.5px;color:#383838;font-weight:normal;font-style:normal;font-family:'Liberation Sans', sans-serif;letter-spacing:0.492px;">0 (Отсутствие гипертон...</div>
<svg class="r" style="left:787px;top:579px;" width="16" height="12" viewBox="0 0 16 12"><path d="M2.4 2.3 L7.2 8.4 L12 2.3" fill="none" stroke="#c8c8c8" stroke-width="1"/></svg>
<div class="t" id="ots7" style="left:823.60px;top:578.00px;font-size:12.5px;color:#383838;font-weight:normal;font-style:normal;font-family:'Liberation Sans', sans-serif;letter-spacing:0.237px;">1 (Отсутствие АГ)</div>
<svg class="r" style="left:987px;top:579px;" width="16" height="12" viewBox="0 0 16 12"><path d="M2.4 2.3 L7.2 8.4 L12 2.3" fill="none" stroke="#c8c8c8" stroke-width="1"/></svg>
<div class="t" id="nal7" style="left:1023.70px;top:578.00px;font-size:12.5px;color:#383838;font-weight:normal;font-style:normal;font-family:'Liberation Sans', sans-serif;letter-spacing:0.308px;">0 (Отсутствие)</div>
<svg class="r" style="left:1187px;top:579px;" width="16" height="12" viewBox="0 0 16 12"><path d="M2.4 2.3 L7.2 8.4 L12 2.3" fill="none" stroke="#c8c8c8" stroke-width="1"/></svg>
<div class="t" id="imt8" style="right:1641.86px;top:610.00px;font-size:12.5px;color:#383838;font-weight:normal;font-style:normal;font-family:'Liberation Sans', sans-serif;letter-spacing:0.435px;">27.513384889946465</div>
<div class="t" id="kur8" style="left:223.10px;top:610.00px;font-size:12.5px;color:#383838;font-weight:normal;font-style:normal;font-family:'Liberation Sans', sans-serif;letter-spacing:0.500px;">1 (Наличие)</div>
<svg class="r" style="left:387px;top:611px;" width="16" height="12" viewBox="0 0 16 12"><path d="M2.4 2.3 L7.2 8.4 L12 2.3" fill="none" stroke="#c8c8c8" stroke-width="1"/></svg>
<div class="t" id="glu8" style="right:1243.50px;top:610.00px;font-size:12.5px;color:#383838;font-weight:normal;font-style:normal;font-family:'Liberation Sans', sans-serif;letter-spacing:-0.700px;">5.8</div>
<div class="t" id="art8" style="left:623.40px;top:610.00px;font-size:12.5px;color:#383838;font-weight:normal;font-style:normal;font-family:'Liberation Sans', sans-serif;letter-spacing:0.705px;">1 (Наличие гипертонии)</div>
<svg class="r" style="left:787px;top:611px;" width="16" height="12" viewBox="0 0 16 12"><path d="M2.4 2.3 L7.2 8.4 L12 2.3" fill="none" stroke="#c8c8c8" stroke-width="1"/></svg>
<div class="t" id="ots8" style="left:823.40px;top:610.00px;font-size:12.5px;color:#383838;font-weight:normal;font-style:normal;font-family:'Liberation Sans', sans-serif;letter-spacing:0.338px;">0 (Наличие АГ)</div>
<svg class="r" style="left:987px;top:611px;" width="16" height="12" viewBox="0 0 16 12"><path d="M2.4 2.3 L7.2 8.4 L12 2.3" fill="none" stroke="#c8c8c8" stroke-width="1"/></svg>
<div class="t" id="nal8" style="left:1023.10px;top:610.00px;font-size:12.5px;color:#383838;font-weight:normal;font-style:normal;font-family:'Liberation Sans', sans-serif;letter-spacing:0.500px;">1 (Наличие)</div>
<svg class="r" style="left:1187px;top:611px;" width="16" height="12" viewBox="0 0 16 12"><path d="M2.4 2.3 L7.2 8.4 L12 2.3" fill="none" stroke="#c8c8c8" stroke-width="1"/></svg>
<div class="t" id="imt9" style="right:1641.86px;top:642.00px;font-size:12.5px;color:#383838;font-weight:normal;font-style:normal;font-family:'Liberation Sans', sans-serif;letter-spacing:0.435px;">27.548209366391188</div>
<div class="t" id="kur9" style="left:223.70px;top:642.00px;font-size:12.5px;color:#383838;font-weight:normal;font-style:normal;font-family:'Liberation Sans', sans-serif;letter-spacing:0.308px;">0 (Отсутствие)</div>
<svg class="r" style="left:387px;top:643px;" width="16" height="12" viewBox="0 0 16 12"><path d="M2.4 2.3 L7.2 8.4 L12 2.3" fill="none" stroke="#c8c8c8" stroke-width="1"/></svg>
<div class="t" id="glu9" style="right:1243.50px;top:642.00px;font-size:12.5px;color:#383838;font-weight:normal;font-style:normal;font-family:'Liberation Sans', sans-serif;letter-spacing:-0.700px;">5.2</div>
<div class="t" id="art9" style="left:623.40px;top:642.00px;font-size:12.5px;color:#383838;font-weight:normal;font-style:normal;font-family:'Liberation Sans', sans-serif;letter-spacing:0.705px;">1 (Наличие гипертонии)</div>
<svg class="r" style="left:787px;top:643px;" width="16" height="12" viewBox="0 0 16 12"><path d="M2.4 2.3 L7.2 8.4 L12 2.3" fill="none" stroke="#c8c8c8" stroke-width="1"/></svg>
<div class="t" id="ots9" style="left:823.40px;top:642.00px;font-size:12.5px;color:#383838;font-weight:normal;font-style:normal;font-family:'Liberation Sans', sans-serif;letter-spacing:0.338px;">0 (Наличие АГ)</div>
<svg class="r" style="left:987px;top:643px;" width="16" height="12" viewBox="0 0 16 12"><path d="M2.4 2.3 L7.2 8.4 L12 2.3" fill="none" stroke="#c8c8c8" stroke-width="1"/></svg>
<div class="t" id="nal9" style="left:1023.10px;top:642.00px;font-size:12.5px;color:#383838;font-weight:normal;font-style:normal;font-family:'Liberation Sans', sans-serif;letter-spacing:0.500px;">1 (Наличие)</div>
<svg class="r" style="left:1187px;top:643px;" width="16" height="12" viewBox="0 0 16 12"><path d="M2.4 2.3 L7.2 8.4 L12 2.3" fill="none" stroke="#c8c8c8" stroke-width="1"/></svg>
<div class="t" id="imt10" style="right:1641.86px;top:674.00px;font-size:12.5px;color:#383838;font-weight:normal;font-style:normal;font-family:'Liberation Sans', sans-serif;letter-spacing:0.435px;">30.693877551020407</div>
<div class="t" id="kur10" style="left:223.10px;top:674.00px;font-size:12.5px;color:#383838;font-weight:normal;font-style:normal;font-family:'Liberation Sans', sans-serif;letter-spacing:0.500px;">1 (Наличие)</div>
<svg class="r" style="left:387px;top:675px;" width="16" height="12" viewBox="0 0 16 12"><path d="M2.4 2.3 L7.2 8.4 L12 2.3" fill="none" stroke="#c8c8c8" stroke-width="1"/></svg>
<div class="t" id="glu10" style="right:1243.50px;top:674.00px;font-size:12.5px;color:#383838;font-weight:normal;font-style:normal;font-family:'Liberation Sans', sans-serif;letter-spacing:-0.700px;">6.4</div>
<div class="t" id="art10" style="left:623.40px;top:674.00px;font-size:12.5px;color:#383838;font-weight:normal;font-style:normal;font-family:'Liberation Sans', sans-serif;letter-spacing:0.705px;">1 (Наличие гипертонии)</div>
<svg class="r" style="left:787px;top:675px;" width="16" height="12" viewBox="0 0 16 12"><path d="M2.4 2.3 L7.2 8.4 L12 2.3" fill="none" stroke="#c8c8c8" stroke-width="1"/></svg>
<div class="t" id="ots10" style="left:823.40px;top:674.00px;font-size:12.5px;color:#383838;font-weight:normal;font-style:normal;font-family:'Liberation Sans', sans-serif;letter-spacing:0.338px;">0 (Наличие АГ)</div>
<svg class="r" style="left:987px;top:675px;" width="16" height="12" viewBox="0 0 16 12"><path d="M2.4 2.3 L7.2 8.4 L12 2.3" fill="none" stroke="#c8c8c8" stroke-width="1"/></svg>
<div class="t" id="nal10" style="left:1023.10px;top:674.00px;font-size:12.5px;color:#383838;font-weight:normal;font-style:normal;font-family:'Liberation Sans', sans-serif;letter-spacing:0.500px;">1 (Наличие)</div>
<svg class="r" style="left:1187px;top:675px;" width="16" height="12" viewBox="0 0 16 12"><path d="M2.4 2.3 L7.2 8.4 L12 2.3" fill="none" stroke="#c8c8c8" stroke-width="1"/></svg>
<div class="t" id="imt11" style="right:1641.86px;top:706.00px;font-size:12.5px;color:#383838;font-weight:normal;font-style:normal;font-family:'Liberation Sans', sans-serif;letter-spacing:0.435px;">19.692665289256198</div>
<div class="t" id="kur11" style="left:223.10px;top:706.00px;font-size:12.5px;color:#383838;font-weight:normal;font-style:normal;font-family:'Liberation Sans', sans-serif;letter-spacing:0.500px;">1 (Наличие)</div>
<svg class="r" style="left:387px;top:707px;" width="16" height="12" viewBox="0 0 16 12"><path d="M2.4 2.3 L7.2 8.4 L12 2.3" fill="none" stroke="#c8c8c8" stroke-width="1"/></svg>
<div class="t" id="glu11" style="right:1243.50px;top:706.00px;font-size:12.5px;color:#383838;font-weight:normal;font-style:normal;font-family:'Liberation Sans', sans-serif;letter-spacing:-0.700px;">5.7</div>
<div class="t" id="art11" style="left:623.40px;top:706.00px;font-size:12.5px;color:#383838;font-weight:normal;font-style:normal;font-family:'Liberation Sans', sans-serif;letter-spacing:0.705px;">1 (Наличие гипертонии)</div>
<svg class="r" style="left:787px;top:707px;" width="16" height="12" viewBox="0 0 16 12"><path d="M2.4 2.3 L7.2 8.4 L12 2.3" fill="none" stroke="#c8c8c8" stroke-width="1"/></svg>
<div class="t" id="ots11" style="left:823.40px;top:706.00px;font-size:12.5px;color:#383838;font-weight:normal;font-style:normal;font-family:'Liberation Sans', sans-serif;letter-spacing:0.338px;">0 (Наличие АГ)</div>
<svg class="r" style="left:987px;top:707px;" width="16" height="12" viewBox="0 0 16 12"><path d="M2.4 2.3 L7.2 8.4 L12 2.3" fill="none" stroke="#c8c8c8" stroke-width="1"/></svg>
<div class="t" id="nal11" style="left:1023.10px;top:706.00px;font-size:12.5px;color:#383838;font-weight:normal;font-style:normal;font-family:'Liberation Sans', sans-serif;letter-spacing:0.500px;">1 (Наличие)</div>
<svg class="r" style="left:1187px;top:707px;" width="16" height="12" viewBox="0 0 16 12"><path d="M2.4 2.3 L7.2 8.4 L12 2.3" fill="none" stroke="#c8c8c8" stroke-width="1"/></svg>
<div class="t" id="imt12" style="right:1641.86px;top:738.00px;font-size:12.5px;color:#383838;font-weight:normal;font-style:normal;font-family:'Liberation Sans', sans-serif;letter-spacing:0.435px;">33.98437499999999</div>
<div class="t" id="kur12" style="left:223.70px;top:738.00px;font-size:12.5px;color:#383838;font-weight:normal;font-style:normal;font-family:'Liberation Sans', sans-serif;letter-spacing:0.308px;">0 (Отсутствие)</div>
<svg class="r" style="left:387px;top:739px;" width="16" height="12" viewBox="0 0 16 12"><path d="M2.4 2.3 L7.2 8.4 L12 2.3" fill="none" stroke="#c8c8c8" stroke-width="1"/></svg>
<div class="t" id="glu12" style="right:1243.50px;top:738.00px;font-size:12.5px;color:#383838;font-weight:normal;font-style:normal;font-family:'Liberation Sans', sans-serif;letter-spacing:-0.700px;">6.9</div>
<div class="t" id="art12" style="left:623.40px;top:738.00px;font-size:12.5px;color:#383838;font-weight:normal;font-style:normal;font-family:'Liberation Sans', sans-serif;letter-spacing:0.705px;">1 (Наличие гипертонии)</div>
<svg class="r" style="left:787px;top:739px;" width="16" height="12" viewBox="0 0 16 12"><path d="M2.4 2.3 L7.2 8.4 L12 2.3" fill="none" stroke="#c8c8c8" stroke-width="1"/></svg>
<div class="t" id="ots12" style="left:823.40px;top:738.00px;font-size:12.5px;color:#383838;font-weight:normal;font-style:normal;font-family:'Liberation Sans', sans-serif;letter-spacing:0.338px;">0 (Наличие АГ)</div>
<svg class="r" style="left:987px;top:739px;" width="16" height="12" viewBox="0 0 16 12"><path d="M2.4 2.3 L7.2 8.4 L12 2.3" fill="none" stroke="#c8c8c8" stroke-width="1"/></svg>
<div class="t" id="nal12" style="left:1023.10px;top:738.00px;font-size:12.5px;color:#383838;font-weight:normal;font-style:normal;font-family:'Liberation Sans', sans-serif;letter-spacing:0.500px;">1 (Наличие)</div>
<svg class="r" style="left:1187px;top:739px;" width="16" height="12" viewBox="0 0 16 12"><path d="M2.4 2.3 L7.2 8.4 L12 2.3" fill="none" stroke="#c8c8c8" stroke-width="1"/></svg>
<div class="t" id="imt13" style="right:1641.86px;top:770.00px;font-size:12.5px;color:#383838;font-weight:normal;font-style:normal;font-family:'Liberation Sans', sans-serif;letter-spacing:0.435px;">26.296566837107374</div>
<div class="t" id="kur13" style="left:223.10px;top:770.00px;font-size:12.5px;color:#383838;font-weight:normal;font-style:normal;font-family:'Liberation Sans', sans-serif;letter-spacing:0.500px;">1 (Наличие)</div>
<svg class="r" style="left:387px;top:771px;" width="16" height="12" viewBox="0 0 16 12"><path d="M2.4 2.3 L7.2 8.4 L12 2.3" fill="none" stroke="#c8c8c8" stroke-width="1"/></svg>
<div class="t" id="glu13" style="right:1243.50px;top:770.00px;font-size:12.5px;color:#383838;font-weight:normal;font-style:normal;font-family:'Liberation Sans', sans-serif;letter-spacing:-0.700px;">5.9</div>
<div class="t" id="art13" style="left:623.40px;top:770.00px;font-size:12.5px;color:#383838;font-weight:normal;font-style:normal;font-family:'Liberation Sans', sans-serif;letter-spacing:0.705px;">1 (Наличие гипертонии)</div>
<svg class="r" style="left:787px;top:771px;" width="16" height="12" viewBox="0 0 16 12"><path d="M2.4 2.3 L7.2 8.4 L12 2.3" fill="none" stroke="#c8c8c8" stroke-width="1"/></svg>
<div class="t" id="ots13" style="left:823.40px;top:770.00px;font-size:12.5px;color:#383838;font-weight:normal;font-style:normal;font-family:'Liberation Sans', sans-serif;letter-spacing:0.338px;">0 (Наличие АГ)</div>
<svg class="r" style="left:987px;top:771px;" width="16" height="12" viewBox="0 0 16 12"><path d="M2.4 2.3 L7.2 8.4 L12 2.3" fill="none" stroke="#c8c8c8" stroke-width="1"/></svg>
<div class="t" id="nal13" style="left:1023.10px;top:770.00px;font-size:12.5px;color:#383838;font-weight:normal;font-style:normal;font-family:'Liberation Sans', sans-serif;letter-spacing:0.500px;">1 (Наличие)</div>
<svg class="r" style="left:1187px;top:771px;" width="16" height="12" viewBox="0 0 16 12"><path d="M2.4 2.3 L7.2 8.4 L12 2.3" fill="none" stroke="#c8c8c8" stroke-width="1"/></svg>
<div class="r" style="left:1240px;top:199px;width:5px;height:584px;background:#e9eaef;"></div>
<svg class="r" style="left:1250px;top:220px;" width="18" height="18" viewBox="0 0 18 18"><path d="M3.6 10.4 L7 15 L13 4.5" fill="none" stroke="#38c038" stroke-width="1.5" stroke-linecap="round"/></svg>
<div class="t" id="status" style="left:1274.10px;top:221.00px;font-size:14.5px;color:#5c5c5c;font-weight:normal;font-style:normal;font-family:'Liberation Sans', sans-serif;letter-spacing:0.127px;">Анализ выполнен успешно</div>
<div class="r" style="left:1553px;top:213px;width:143px;height:32px;background:transparent;box-sizing:border-box;border:1px dashed #e06a6a;border-radius:4px;"></div>
<svg class="r" style="left:1558px;top:216px;" width="28" height="26" viewBox="0 0 28 26"><path d="M6.1 4.9 V20.1 H22.6" fill="none" stroke="#e06a6a" stroke-width="1.6"/><path d="M9.1 14.8 L12.5 11 L15.4 15 L21.3 8.8" fill="none" stroke="#e06a6a" stroke-width="1.5"/></svg>
<div class="t" id="graphs" style="left:1588.00px;top:222.00px;font-size:12.5px;color:#e06a6a;font-weight:normal;font-style:normal;font-family:'Liberation Sans', sans-serif;letter-spacing:0.071px;">Скачать графики</div>
<div class="r" style="left:1704px;top:213px;width:125px;height:32px;background:transparent;box-sizing:border-box;border:1px dashed #1f6fd1;border-radius:4px;"></div>
<svg class="r" style="left:1710px;top:215px;" width="26" height="28" viewBox="0 0 26 28"><path d="M6.8 4.5 H15 L20.2 9.4 V22.8 Q20.2 23.4 19.6 23.4 H7.4 Q6.8 23.4 6.8 22.8 Z" fill="none" stroke="#1f6acb" stroke-width="1.5" stroke-linejoin="round"/><path d="M14.3 4.6 V9.8 H20.2" fill="none" stroke="#1f6acb" stroke-width="1.4"/><path d="M9.4 13.3 L11 19.5 L12.9 15 L14.6 19.5 L16.4 13.3" fill="none" stroke="#1f6acb" stroke-width="1.5" stroke-linejoin="round"/></svg>
<div class="t" id="word" style="left:1738.00px;top:222.00px;font-size:12.5px;color:#1f6fd1;font-weight:normal;font-style:normal;font-family:'Liberation Sans', sans-serif;letter-spacing:0.145px;">Скачать Word</div>
<div class="r" style="left:1253px;top:260px;width:576px;height:523px;background:#f9f9fa;"></div>
<div class="r" style="left:1812px;top:260px;width:17px;height:523px;background:#f0f0f0;"></div>
<svg class="r" style="left:1812px;top:260px;" width="17" height="16" viewBox="0 0 17 16"><path d="M4.5 11.6 L12.5 11.6 L8.5 7 Z" fill="#a3a3a3"/></svg>
<div class="r" style="left:1814px;top:277px;width:13px;height:350px;background:#c1c1c1;"></div>
<div class="t" id="doc0" style="left:1289.60px;top:276.00px;font-size:16px;color:#000000;font-weight:normal;font-style:normal;font-family:'Liberation Serif', serif;letter-spacing:0.000px;">StatTech 2.6.5</div>
<div class="t" id="doc1" style="left:1289.60px;top:294.00px;font-size:16px;color:#000000;font-weight:normal;font-style:normal;font-family:'Liberation Serif', serif;letter-spacing:0.000px;">© ООО “Статтех”, Россия, 2020</div>
<div class="t" id="doc2" style="left:1289.60px;top:312.00px;font-size:16px;color:#000000;font-weight:normal;font-style:normal;font-family:'Liberation Serif', serif;letter-spacing:0.000px;">Программа зарегистрирована Федеральной службой</div>
<div class="t" id="doc3" style="left:1289.60px;top:330.00px;font-size:16px;color:#000000;font-weight:normal;font-style:normal;font-family:'Liberation Serif', serif;letter-spacing:0.000px;">по интеллектуальной собственности, номер</div>
<div class="t" id="doc4" style="left:1289.60px;top:347.00px;font-size:16px;color:#000000;font-weight:normal;font-style:normal;font-family:'Liberation Serif', serif;letter-spacing:0.000px;">регистрации 2020615715, дата регистрации</div>
<div class="t" id="doc5" style="left:1289.60px;top:365.00px;font-size:16px;color:#000000;font-weight:normal;font-style:normal;font-family:'Liberation Serif', serif;letter-spacing:0.000px;">29.05.2020</div>
<div class="t" id="user" style="right:67.20px;top:399.40px;font-size:16px;color:#000000;font-weight:normal;font-style:normal;font-family:'Liberation Serif', serif;letter-spacing:0.000px;">Пользователь: Marina</div>
<div class="t" id="mail" style="right:67.20px;top:417.70px;font-size:16px;color:#000000;font-weight:normal;font-style:normal;font-family:'Liberation Serif', serif;letter-spacing:0.000px;">Почта: marina-zabolotsk@mail.ru</div>
<div class="t" id="dtitle" style="left:1423.70px;top:455.10px;font-size:18.67px;color:#000000;font-weight:bold;font-style:normal;font-family:'Liberation Serif', serif;letter-spacing:0.000px;">Анализ данных: «ДЕМО»</div>
<div class="r" style="left:1289px;top:495px;width:487px;height:1px;background:#a0a0a0;"></div>
<div class="t" id="dsub" style="left:1389.60px;top:519.90px;font-size:16px;color:#000000;font-weight:bold;font-style:normal;font-family:'Liberation Serif', serif;letter-spacing:0.000px;">Описание методов статистического анализа</div>
<div class="t" style="left:1323.50px;top:563.6px;width:452.70px;font-size:16px;font-family:'Liberation Serif', serif;color:#000;text-align:justify;text-align-last:justify;">Статистический анализ проводился с использованием программы</div>
<div class="t" style="left:1289.00px;top:587.6px;width:487.20px;font-size:16px;font-family:'Liberation Serif', serif;color:#000;">StatTech v. 2.6.5 (разработчик - ООО &quot;Статтех&quot;, Россия).</div>
<div class="t" style="left:1323.50px;top:611.6px;width:452.70px;font-size:16px;font-family:'Liberation Serif', serif;color:#000;text-align:justify;text-align-last:justify;">Количественные показатели оценивались на предмет</div>
<div class="t" style="left:1289.00px;top:635.6px;width:487.20px;font-size:16px;font-family:'Liberation Serif', serif;color:#000;text-align:justify;text-align-last:justify;">соответствия нормальному распределению с помощью критерия</div>
<div class="t" style="left:1289.00px;top:659.6px;width:487.20px;font-size:16px;font-family:'Liberation Serif', serif;color:#000;text-align:justify;text-align-last:justify;">Шапиро-Уилка (при числе исследуемых менее 50) или критерия</div>
<div class="t" style="left:1289.00px;top:683.6px;width:487.20px;font-size:16px;font-family:'Liberation Serif', serif;color:#000;">Колмогорова-Смирнова (при числе исследуемых более 50).</div>
<div class="t" style="left:1323.50px;top:707.6px;width:452.70px;font-size:16px;font-family:'Liberation Serif', serif;color:#000;text-align:justify;text-align-last:justify;">В случае отсутствия нормального распределения количественные</div>
<div class="t" style="left:1289.00px;top:731.6px;width:487.20px;font-size:16px;font-family:'Liberation Serif', serif;color:#000;text-align:justify;text-align-last:justify;">данные описывались с помощью медианы (Me) и нижнего и верхнего</div>
<div class="t" style="left:1289.00px;top:755.6px;width:487.20px;font-size:16px;font-family:'Liberation Serif', serif;color:#000;">квартилей (Q1 – Q3).</div>
</body></html>
